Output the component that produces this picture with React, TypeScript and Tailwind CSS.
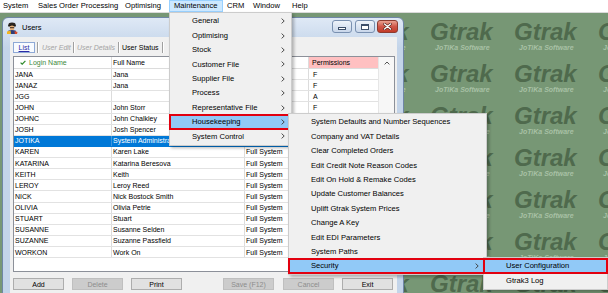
import React from "react";

type User = [string, string, string, string];

const users: User[] = [
  ["JANA", "Jana", "Full System", "F"],
  ["JANAZ", "Jana", "Full System", "F"],
  ["JGG", "", "Full System", "A"],
  ["JOHN", "John Storr", "Full System", "F"],
  ["JOHNC", "John Chalkley", "Full System", "F"],
  ["JOSH", "Josh Spencer", "Full System", "F"],
  ["JOTIKA", "System Administrator", "Full System", "F"],
  ["KAREN", "Karen Lake", "Full System", "F"],
  ["KATARINA", "Katarina Beresova", "Full System", "F"],
  ["KEITH", "Keith", "Full System", "F"],
  ["LEROY", "Leroy Reed", "Full System", "F"],
  ["NICK", "Nick Bostock Smith", "Full System", "F"],
  ["OLIVIA", "Olivia Petrie", "Full System", "F"],
  ["STUART", "Stuart", "Full System", "F"],
  ["SUSANNE", "Susanne Selden", "Full System", "F"],
  ["SUZANNE", "Suzanne Passfield", "Full System", "F"],
  ["WORKON", "Work On", "Full System", "F"],
];

const menubar: [string, string][] = [
  ["System", "w-[34px] pl-[3px]"],
  ["Sales Order Processing", "w-[87px] pl-[4px]"],
  ["Optimising", "w-[48px] pl-[4px]"],
  ["Maintenance", "w-[54px] pl-[4px] bg-[#cce8ff] border border-[#99d1ff]"],
  ["CRM", "w-[26px] pl-[4px]"],
  ["Window", "w-[39px] pl-[4px]"],
  ["Help", "w-[40px] pl-[4px]"],
];

const maintItems = [
  "General",
  "Optimising",
  "Stock",
  "Customer File",
  "Supplier File",
  "Process",
  "Representative File",
  "Housekeeping",
  "System Control",
];

const houseItems = [
  "System Defaults and Number Sequences",
  "Company and VAT Details",
  "Clear Completed Orders",
  "Edit Credit Note Reason Codes",
  "Edit On Hold & Remake Codes",
  "Update Customer Balances",
  "Uplift Gtrak System Prices",
  "Change A Key",
  "Edit EDI Parameters",
  "System Paths",
  "Security",
];

function Chevron() {
  return (
    <svg width="4" height="6" viewBox="0 0 4 6" className="shrink-0">
      <path d="M0.6 0.6 L3.2 3 L0.6 5.4" fill="none" stroke="#3a3a3a" strokeWidth="0.9" />
    </svg>
  );
}

function Menu({
  items,
  active,
  arrows,
  className,
}: {
  items: string[];
  active: number;
  arrows: (i: number) => boolean;
  className: string;
}) {
  return (
    <div
      className={`absolute border border-[#cccccc] bg-[#f0f0f0] py-[1px] shadow-[2px_2px_3px_rgba(0,0,0,0.28)] ${className}`}
    >
      {items.map((label, i) => (
        <div
          key={label}
          className={`relative flex h-[14.4px] items-center justify-between pl-[22px] pr-[6px] ${
            i === active ? "bg-[#91c9f7]" : ""
          }`}
        >
          <span className="leading-none">{label}</span>
          {arrows(i) ? <Chevron /> : null}
          {i === active ? (
            <span className="pointer-events-none absolute -inset-[1px] border-2 border-[#e2000f]" />
          ) : null}
        </div>
      ))}
    </div>
  );
}

function WindowIcon() {
  return (
    <svg width="11" height="12" viewBox="0 0 11 12">
      <ellipse cx="5" cy="2.6" rx="3.6" ry="2.2" fill="#2a2420" />
      <rect x="1" y="3.2" width="8" height="1.2" fill="#1c1814" />
      <circle cx="5" cy="6" r="2.4" fill="#e8b27c" />
      <rect x="3" y="5.2" width="4.2" height="1" fill="#3b2b20" />
      <path d="M0.5 12 L1.5 8.6 L5 8 L8.6 8.6 L9.6 12 Z" fill="#2f3e7a" />
      <path d="M0 9.5 L3.6 8.5 L4 12 L0 12 Z" fill="#f2b51e" />
      <path d="M7.5 9 L10.5 10 L10 12 L7.8 12 Z" fill="#d84b2a" />
    </svg>
  );
}

function TitleButton({ kind }: { kind: "min" | "max" | "close" }) {
  if (kind === "close") {
    return (
      <div className="ml-[2px] flex h-[13px] w-[21px] items-center justify-center rounded-[3px] border border-[#8d3b30] bg-gradient-to-b from-[#e9a191] via-[#d0574a] to-[#c23a27]">
        <svg width="9" height="7" viewBox="0 0 9 7">
          <path d="M1.5 1 L7.5 6 M7.5 1 L1.5 6" stroke="#4b1a14" strokeWidth="2.6" strokeLinecap="round" />
          <path d="M1.5 1 L7.5 6 M7.5 1 L1.5 6" stroke="#ffffff" strokeWidth="1.5" strokeLinecap="round" />
        </svg>
      </div>
    );
  }
  return (
    <div
      className={`flex h-[13px] w-[20px] items-center justify-center rounded-[3px] border border-[#7990b0] bg-gradient-to-b from-[#eef3fa] to-[#c9d7ea] ${
        kind === "max" ? "ml-[3px]" : ""
      }`}
    >
      {kind === "min" ? (
        <span className="mt-[3px] h-[3px] w-[8px] border border-[#3c4e69] bg-white" />
      ) : (
        <span className="h-[6px] w-[8px] border border-[#3c4e69] border-t-2 bg-white" />
      )}
    </div>
  );
}

function Btn({ label, disabled, className }: { label: string; disabled?: boolean; className?: string }) {
  return (
    <div
      className={`flex h-[12px] w-[51px] items-center justify-center border text-[7px] leading-none ${
        disabled
          ? "border-[#bfbfbf] bg-[#cccccc] text-[#8d8d8d]"
          : "border-[#adadad] bg-[#e1e1e1] text-black"
      } ${className ?? ""}`}
    >
      {label}
    </div>
  );
}

function Sep() {
  return <span className="h-[11px] w-[2px] shrink-0 border-l border-r border-l-[#a0a0a0] border-r-white" />;
}

function UsersWindow() {
  return (
    <div className="ml-[2px] mt-[4px] flex h-[290px] w-[402px] shrink-0 flex-col rounded-t-[6px] border border-[#6f86a6] bg-gradient-to-b from-[#dfe9f6] to-[#c3d4e9] to-[30px]">
      <div className="flex h-[19px] shrink-0 items-start">
        <div className="flex h-[19px] items-center pl-[4px]">
          <WindowIcon />
          <span className="ml-[4px] text-[7.5px] leading-none">Users</span>
        </div>
        <div className="ml-auto mr-[5px] mt-[2px] flex">
          <TitleButton kind="min" />
          <TitleButton kind="max" />
          <TitleButton kind="close" />
        </div>
      </div>

      <div className="ml-[7px] mr-[6px] flex flex-1 flex-col bg-[#f0f0f0] text-[7px]">
        {/* tabs */}
        <div className="ml-[3px] mt-[5px] flex h-[11px] items-center leading-none">
          <div className="flex h-[11px] w-[22px] items-center justify-center border border-[#8ea9d6] bg-[#f8fbff] text-[#2b2ba6] underline">
            List
          </div>
          <span className="w-[2px]" />
          <Sep />
          <span className="w-[34px] pl-[3px] italic text-[#a3a3a3]">User Edit</span>
          <Sep />
          <span className="w-[43px] pl-[2px] italic text-[#a3a3a3]">User Details</span>
          <Sep />
          <span className="w-[42px] pl-[2px]">User Status</span>
          <Sep />
        </div>

        {/* list view */}
        <div className="ml-[3px] mt-[3px] flex h-[216px] w-[382px] border border-[#8c9099] bg-white">
          <div className="flex-1">
            <div className="grid h-[12px] grid-cols-[98px_133px_64px_69px] border-b border-[#dcdcdc] leading-none">
              <div className="flex items-center border-r border-[#dcdcdc] pl-[6px] text-[#3f8a3c]">
                <svg width="6" height="5" viewBox="0 0 6 5" className="mr-[3px]">
                  <path d="M0.6 2.6 L2.2 4.2 L5.4 0.8" fill="none" stroke="#2f8a2a" strokeWidth="1.2" />
                </svg>
                Login Name
              </div>
              <div className="flex items-center border-r border-[#dcdcdc] pl-[1px]">Full Name</div>
              <div className="flex items-center border-r border-[#dcdcdc] pl-[1px]">Group</div>
              <div className="flex items-center bg-[#ffc0c1] pl-[3px]">Permissions</div>
            </div>
            {users.map(([login, name, group, perm]) => {
              const sel = login === "JOTIKA";
              const line = sel ? "border-[#3d95de]" : "border-[#dcdcdc]";
              return (
                <div
                  key={login}
                  className={`grid h-[11.125px] grid-cols-[98px_133px_64px_69px] border-b leading-none ${
                    sel ? "border-[#0078d7] bg-[#0078d7] text-white" : "border-[#e2e2e2]"
                  }`}
                >
                  <div className={`flex items-center border-r pl-[1px] ${line}`}>{login}</div>
                  <div className={`flex items-center border-r pl-[1px] ${line}`}>{name}</div>
                  <div className={`flex items-center border-r pl-[1px] ${line}`}>{group}</div>
                  <div className="flex items-center pl-[4px]">{perm}</div>
                </div>
              );
            })}
          </div>
          <div className="flex w-[16px] flex-col items-center border-l border-[#e6e6e6] bg-[#f7f7f7] pt-[4px]">
            <svg width="6" height="4" viewBox="0 0 6 4">
              <path d="M0.6 3.4 L3 1 L5.4 3.4" fill="none" stroke="#555" strokeWidth="1" />
            </svg>
          </div>
        </div>

        {/* buttons */}
        <div className="ml-[3px] mt-[6px] flex">
          <Btn label="Add" />
          <Btn label="Delete" disabled className="ml-[8px]" />
          <Btn label="Print" className="ml-[8px]" />
          <Btn label="Save (F12)" disabled className="ml-[41px]" />
          <Btn label="Cancel" disabled className="ml-[9px]" />
          <Btn label="Exit" className="ml-[8px] w-[50px]" />
        </div>
      </div>
    </div>
  );
}

export default function App() {
  return (
    <div className="relative flex h-[293px] w-[608px] flex-col overflow-hidden bg-white font-['Liberation_Sans',Arial,sans-serif] text-[7.6px] text-black">
      {/* menu bar */}
      <div className="flex h-[13px] shrink-0 items-start border-b border-[#dadada] bg-white">
        {menubar.map(([label, cls]) => (
          <div key={label} className={`flex h-[12px] items-center leading-none ${cls}`}>
            {label}
          </div>
        ))}
      </div>

      {/* MDI desktop */}
      <div className="flex flex-1 items-start overflow-hidden bg-[#779775]">
        <UsersWindow />

        {/* watermark background, visible right of the window */}
        <div className="h-full flex-1 overflow-hidden">
          <div className="-ml-[58px] flex w-[336px] flex-wrap pt-[7px]">
            {Array.from({ length: 28 }).map((_, i) => (
              <div key={i} className="flex h-[42px] w-[84px] flex-col">
                <span className="h-[24px] text-[24px] font-bold italic leading-[24px] text-[#4f6a4d]">Gtrak</span>
                <span className="h-[8px] whitespace-nowrap pl-[5px] text-[7px] font-bold italic leading-[8px] text-[#a8c1a5]">
                  JoTiKa Software
                </span>
              </div>
            ))}
          </div>
        </div>
      </div>

      {/* Maintenance menu */}
      <Menu items={maintItems} active={7} arrows={() => true} className="left-[169px] top-[12px] w-[123px]" />
      {/* Housekeeping submenu */}
      <Menu
        items={houseItems}
        active={10}
        arrows={(i) => i === 10}
        className="left-[288px] top-[113px] w-[199px] pr-[1px]"
      />
      {/* Security submenu */}
      <Menu
        items={["User Configuration", "Gtrak3 Log"]}
        active={0}
        arrows={() => false}
        className="left-[483px] top-[257px] w-[125px]"
      />
    </div>
  );
}
